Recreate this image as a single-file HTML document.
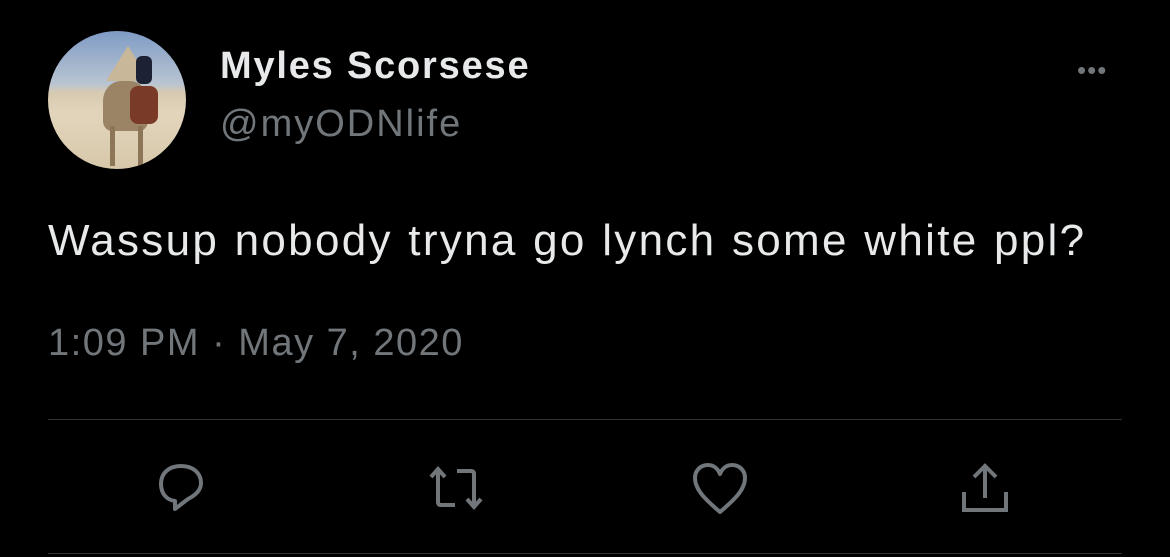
<!DOCTYPE html>
<html><head><meta charset="utf-8"><style>
html,body{margin:0;padding:0;background:#000;}
body{width:1170px;height:557px;position:relative;overflow:hidden;font-family:"Liberation Sans",sans-serif;}
.av{position:absolute;left:48px;top:31px;width:138px;height:138px;border-radius:50%;overflow:hidden;
background:linear-gradient(180deg,#7f9bc4 0%,#b8c4d2 38%,#d8cab0 45%,#e2d5bc 60%,#d7c8aa 100%);}
.pyr{position:absolute;left:58px;top:15px;width:0;height:0;border-left:22px solid transparent;border-right:22px solid transparent;border-bottom:35px solid #c9b79a;}
.cam{position:absolute;left:55px;top:50px;width:45px;height:50px;background:#9a8465;border-radius:40% 40% 20% 20%;}
.rider{position:absolute;left:88px;top:25px;width:16px;height:28px;background:#1c2233;border-radius:6px;}
.blanket{position:absolute;left:82px;top:55px;width:28px;height:38px;background:#7a3a28;border-radius:8px;}
.leg{position:absolute;top:95px;width:5px;height:40px;background:#8c7657;}
.name{position:absolute;left:220px;top:45px;color:#e7e9ea;font-weight:bold;font-size:38px;letter-spacing:1.8px;}
.handle{position:absolute;left:220px;top:103px;color:#71767b;font-size:38px;letter-spacing:2px;}
.dots{position:absolute;left:1077px;top:55px;color:#71767b;font-size:26px;letter-spacing:1px;}
.txt{position:absolute;left:48px;top:216px;color:#e7e9ea;font-size:44px;letter-spacing:2.3px;word-spacing:1px;}
.time{position:absolute;left:48px;top:322px;color:#71767b;font-size:38px;letter-spacing:1.5px;}
.line{position:absolute;left:48px;width:1074px;height:1px;background:#2f3336;}
svg{position:absolute;}
</style></head><body>
<div class="av"><div class="pyr"></div><div class="cam"></div><div class="blanket"></div><div class="rider"></div>
<div class="leg" style="left:62px"></div><div class="leg" style="left:90px"></div></div>
<div class="name">Myles Scorsese</div>
<div class="handle">@myODNlife</div>
<div class="dots">•••</div>
<div class="txt">Wassup nobody tryna go lynch some white ppl?</div>
<div class="time">1:09 PM · May 7, 2020</div>
<div class="line" style="top:419px"></div>
<div class="line" style="top:553px"></div>
<svg style="left:153px;top:462px" width="56" height="56" viewBox="0 0 56 56" fill="none" stroke="#71767b" stroke-width="4" stroke-linejoin="round">
<path d="M28 4C16 4 8 11 8 22c0 10 6 16 14 17v8l13-10c8-4 13-9 13-16C48 11 40 4 28 4z"/></svg>
<svg style="left:428px;top:464px" width="56" height="48" viewBox="0 0 56 48" fill="none" stroke="#71767b" stroke-width="4">
<path d="M10 6v32c0 2 1 3 3 3h14"/><path d="M3 13l7-8 7 8"/>
<path d="M46 42V10c0-2-1-3-3-3H29"/><path d="M39 35l7 8 7-8"/></svg>
<svg style="left:692px;top:462px" width="56" height="54" viewBox="0 0 56 54" fill="none" stroke="#71767b" stroke-width="4" stroke-linejoin="round">
<path d="M28 50C14 38 3 28 3 16 3 8 9 3 16 3c6 0 10 4 12 9 2-5 6-9 12-9 7 0 13 5 13 13 0 12-11 22-25 34z"/></svg>
<svg style="left:960px;top:462px" width="50" height="54" viewBox="0 0 50 54" fill="none" stroke="#71767b" stroke-width="4">
<path d="M25 36V4"/><path d="M14 15L25 4l11 11"/><path d="M4 30v18h42V30"/></svg>
</body></html>
